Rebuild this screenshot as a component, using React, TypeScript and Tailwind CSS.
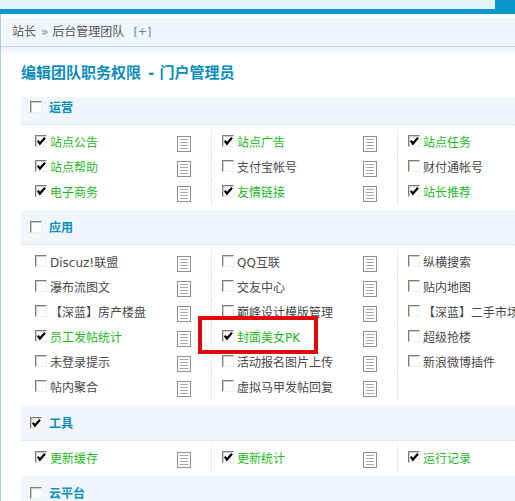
const FONT = '"DejaVu Sans","Noto Sans CJK SC",sans-serif';

type Item = [string, boolean?];

function Check({ on, className = "" }: { on?: boolean; className?: string }) {
  return (
    <span className={`relative block h-[12px] w-[12px] shrink-0 border border-t-[#7d7d78] border-l-[#7d7d78] border-r-[#efefe9] border-b-[#efefe9] bg-white shadow-[inset_1px_1px_0_#cfcfc8] ${className}`}>
      {on && (
        <svg viewBox="0 0 10 10" className="absolute left-0 top-0 h-[10px] w-[10px]">
          <path d="M1.8 4.6 L3.9 7.6 L9 1.8" fill="none" stroke="#000" strokeWidth="2.2" />
        </svg>
      )}
    </span>
  );
}

function DocIcon() {
  return (
    <svg width="14" height="16" viewBox="0 0 14 16" className="mt-[2px] block shrink-0">
      <rect x="0.5" y="0.5" width="13" height="15" fill="#fff" stroke="#8f8f8f" />
      <path d="M3 3.5H11M3 6.5H11M3 9.5H11M3 12.5H11" stroke="#a8a8a8" strokeWidth="1" />
    </svg>
  );
}

function Cell({ item, col }: { item: Item | null; col: number }) {
  const pad = col === 0 ? "pl-[14px]" : "pl-[10px] border-l border-dotted border-l-[#d5d5d5]";
  if (!item) return <div className={`h-[25px] ${pad}`} />;
  return (
    <div className={`flex h-[25px] items-center pr-[20px] ${pad}`}>
      <Check on={item[1]} className="mb-[3px]" />
      <span className={`ml-[3px] flex-1 whitespace-nowrap pt-[2px] text-[12px] leading-[25px] ${item[1] ? "text-[#1fb81f]" : "text-[#4a4a4a]"}`}>
        {item[0]}
      </span>
      {col < 2 && <DocIcon />}
    </div>
  );
}

function Section({ title, on, headClass, items }: { title: string; on?: boolean; headClass: string; items: (Item | null)[] }) {
  return (
    <div>
      <div className={`flex items-center border-b border-dotted border-b-[#d8dfe6] bg-[#f0f6fc] pl-[9px] ${headClass}`}>
        <Check on={on} />
        <span className="ml-[7px] pt-[2px] text-[12px] font-bold leading-[14px] text-[#0b8dbd]">{title}</span>
      </div>
      <div className="grid grid-cols-[190px_186px_186px] py-[5px]">
        {items.map((it, i) => (
          <Cell key={i} item={it} col={i % 3} />
        ))}
      </div>
    </div>
  );
}

export default function App() {
  return (
    <div className="relative h-[501px] w-[515px] overflow-hidden bg-white" style={{ fontFamily: FONT }}>
      <div className="flex h-[14px]">
        <div className="w-[495px]">
          <div className="h-[9px] bg-[#e6f2fa]" />
          <div className="h-[5px] bg-[#0797c8]" />
        </div>
        <div className="flex-1 bg-[#0797c8]" />
      </div>
      <div className="h-[487px] overflow-hidden border-l border-l-[#b5cbd8] pt-[4px]">
        <div className="flex h-[29px] items-center border-b border-b-[#c4d6e2] bg-[#f0f6fc] pl-[11px] text-[12px] text-[#555555]">
          <span>站长</span>
          <span className="ml-[5px] text-[#7a8a99]">»</span>
          <span className="ml-[4px]">后台管理团队</span>
          <span className="ml-[9px] text-[11px] text-[#5a7fa8]">[+]</span>
        </div>
        <div className="h-[9px] bg-gradient-to-b from-[#eaf2f8] to-white" />
        <div className="pl-[20px]">
          <h1 className="mt-[7px] whitespace-nowrap text-[15px] font-bold leading-[20px] text-[#0b8dbd]">
            编辑团队职务权限<span className="ml-[7px]">- 门户管理员</span>
          </h1>
          <div className="mt-[14px]">
            <Section
              title="运营"
              headClass="h-[28px] pb-[8px]"
              items={[
                ["站点公告", true], ["站点广告", true], ["站点任务", true],
                ["站点帮助", true], ["支付宝帐号"], ["财付通帐号"],
                ["电子商务", true], ["友情链接", true], ["站长推荐", true],
              ]}
            />
            <Section
              title="应用"
              headClass="h-[35px]"
              items={[
                ["Discuz!联盟"], ["QQ互联"], ["纵横搜索"],
                ["瀑布流图文"], ["交友中心"], ["贴内地图"],
                ["【深蓝】房产楼盘"], ["巅峰设计模版管理"], ["【深蓝】二手市场"],
                ["员工发帖统计", true], ["封面美女PK", true], ["超级抢楼"],
                ["未登录提示"], ["活动报名图片上传"], ["新浪微博插件"],
                ["帖内聚合"], ["虚拟马甲发帖回复"], null,
              ]}
            />
            <Section
              title="工具"
              on
              headClass="h-[36px]"
              items={[["更新缓存", true], ["更新统计", true], ["运行记录", true]]}
            />
            <Section title="云平台" headClass="h-[35px]" items={[]} />
          </div>
        </div>
      </div>
      <div className="pointer-events-none absolute left-[198px] top-[316px] h-[38px] w-[120px] border-[4px] border-[#e00808]" />
    </div>
  );
}
